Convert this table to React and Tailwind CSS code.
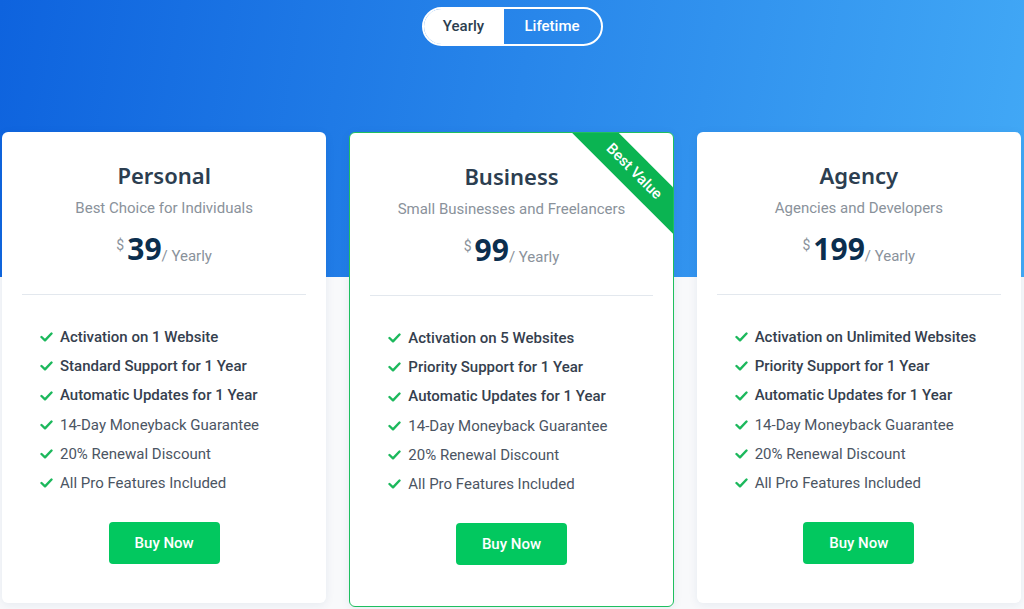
import { useState } from "react"

const plans = [
    {
        name: "Personal",
        tagline: "Best Choice for Individuals",
        price: 39,
        features: [
            ["Activation on 1 Website", true],
            ["Standard Support for 1 Year", true],
            ["Automatic Updates for 1 Year", true],
            ["14-Day Moneyback Guarantee", false],
            ["20% Renewal Discount", false],
            ["All Pro Features Included", false],
        ],
    },
    {
        name: "Business",
        tagline: "Small Businesses and Freelancers",
        price: 99,
        featured: true,
        features: [
            ["Activation on 5 Websites", true],
            ["Priority Support for 1 Year", true],
            ["Automatic Updates for 1 Year", true],
            ["14-Day Moneyback Guarantee", false],
            ["20% Renewal Discount", false],
            ["All Pro Features Included", false],
        ],
    },
    {
        name: "Agency",
        tagline: "Agencies and Developers",
        price: 199,
        features: [
            ["Activation on Unlimited Websites", true],
            ["Priority Support for 1 Year", true],
            ["Automatic Updates for 1 Year", true],
            ["14-Day Moneyback Guarantee", false],
            ["20% Renewal Discount", false],
            ["All Pro Features Included", false],
        ],
    },
]

function Check() {
    return (
        <svg width="13" height="10" viewBox="0 0 13 10" className="shrink-0">
            <polyline points="1.5,5 5,8.3 11.5,1.5" fill="none" stroke="#1cb85c" strokeWidth="2.4" strokeLinecap="round" strokeLinejoin="round" />
        </svg>
    )
}

function PlanCard({ plan }) {
    return (
        <div className={`relative overflow-hidden bg-white rounded-[6px] shadow-[0_2px_10px_rgba(30,60,120,0.08)] px-5 ${plan.featured ? "border border-[#1fbf5f] pt-[29px] pb-[41px]" : "pt-[29px] pb-[39px]"}`}>
            {plan.featured && (
                <div className="absolute top-[22px] right-[-41px] w-[160px] h-[33px] rotate-45 bg-[#0bb452] flex items-center justify-center text-white text-[15px] font-medium">
                    Best Value
                </div>
            )}
            <div className="text-center">
                <h3 className="text-[22px] leading-[28px] font-semibold text-[#2c3e50] font-['Noto_Sans',sans-serif]">{plan.name}</h3>
                <p className="mt-[9px] text-[15px] leading-[20px] text-[#8a929b]">{plan.tagline}</p>
                <div className="mt-[15px] flex items-start justify-center h-[34px]">
                    <span className="text-[14px] text-[#8a929b] mt-[2px] mr-[3px]">$</span>
                    <span className="text-[30px] leading-[32px] font-bold text-[#0b2e4e] font-['Noto_Sans',sans-serif]">{plan.price}</span>
                    <span className="text-[15px] text-[#8a929b] mt-[12px]">/ Yearly</span>
                </div>
            </div>
            <div className="mt-[27px] border-t border-[#e3e8ee]"></div>
            <ul className="mt-[32px] pl-[18px] flex flex-col gap-[9.3px]">
                {plan.features.map(([text, strong], i) => (
                    <li key={i} className="flex items-center gap-[7px] h-5">
                        <Check />
                        <span className={`text-[15px] ${strong ? "font-medium text-[#35404e]" : "text-[#4b5563]"}`}>{text}</span>
                    </li>
                ))}
            </ul>
            <div className="mt-[29px] flex justify-center">
                <button className="w-[111px] h-[42px] rounded-[4px] bg-[#02c85f] text-white text-[15px] font-medium">Buy Now</button>
            </div>
        </div>
    )
}

export default function App() {
    const [period, setPeriod] = useState("yearly")

    return (
        <div className="min-h-[609px] bg-[#f8f9fb] font-['Roboto',sans-serif]">
            <div className="h-[277px] pt-[7px] bg-[linear-gradient(100deg,#0e63de,#42a9f6)]">
                <div className="mx-auto w-[181px] h-[39px] flex rounded-full border-2 border-white overflow-hidden">
                    <button
                        onClick={() => setPeriod("yearly")}
                        className={`w-[80px] text-[15px] font-medium ${period === "yearly" ? "bg-white text-[#2c3e50]" : "text-white"}`}
                    >
                        Yearly
                    </button>
                    <button
                        onClick={() => setPeriod("lifetime")}
                        className={`flex-1 text-[15px] font-medium ${period === "lifetime" ? "bg-white text-[#2c3e50]" : "text-white"}`}
                    >
                        Lifetime
                    </button>
                </div>
            </div>
            <div className="mt-[-145px] pl-[2px] pr-[3px] grid grid-cols-3 gap-[23px] items-start">
                {plans.map((p) => (
                    <PlanCard key={p.name} plan={p} />
                ))}
            </div>
        </div>
    )
}
